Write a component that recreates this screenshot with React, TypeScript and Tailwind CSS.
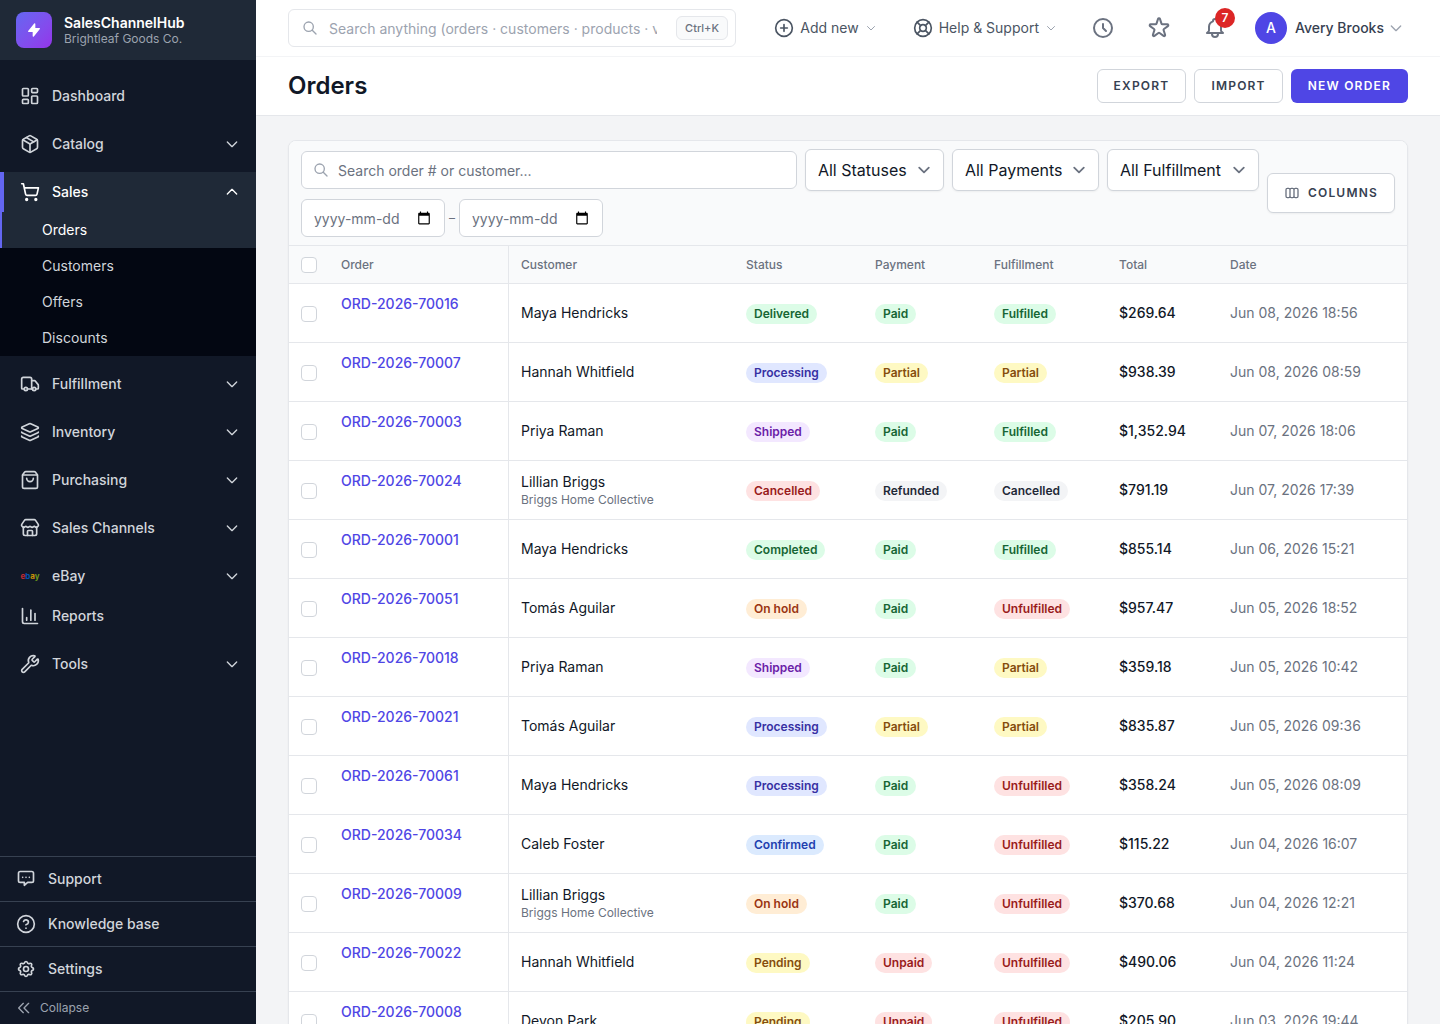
import {
  ChartColumn,
  CircleHelp,
  CirclePlus,
  Layers,
  LayoutDashboard,
  LifeBuoy,
  Package,
  ShoppingBag,
  ShoppingCart,
  Store,
  Truck,
  Wrench,
} from 'lucide-react';
import {
  HiOutlineBell,
  HiOutlineChevronDoubleLeft,
  HiOutlineChevronDown,
  HiOutlineChevronUp,
  HiOutlineClock,
  HiOutlineCog,
  HiOutlineSearch,
  HiOutlineStar,
  HiOutlineViewBoards,
} from 'react-icons/hi';

function EbayMark() {
  return (
    <span aria-hidden="true" className="w-5 text-center text-[8px] leading-none font-bold opacity-80">
      <span className="text-[#e53238]">e</span>
      <span className="text-[#0064d2]">b</span>
      <span className="text-[#f5af02]">a</span>
      <span className="text-[#86b817]">y</span>
    </span>
  );
}

function ChatIcon({ size }: { size: number }) {
  return (
    <svg
      width={size}
      height={size}
      viewBox="0 0 24 24"
      fill="none"
      stroke="currentColor"
      strokeWidth="2"
      strokeLinecap="round"
      strokeLinejoin="round"
    >
      <path d="M8 10h.01M12 10h.01M16 10h.01M10 16H5a2 2 0 01-2-2V5a2 2 0 012-2h14a2 2 0 012 2v9a2 2 0 01-2 2h-5l-4 3.5V16z" />
    </svg>
  );
}

const topNav = [
  { label: 'Dashboard', icon: LayoutDashboard },
  { label: 'Catalog', icon: Package, expandable: true },
  { label: 'Sales', icon: ShoppingCart, expandable: true, children: ['Orders', 'Customers', 'Offers', 'Discounts'] },
  { label: 'Fulfillment', icon: Truck, expandable: true },
  { label: 'Inventory', icon: Layers, expandable: true },
  { label: 'Purchasing', icon: ShoppingBag, expandable: true },
  { label: 'Sales Channels', icon: Store, expandable: true },
  { label: 'eBay', icon: EbayMark, expandable: true, tight: true },
  { label: 'Reports', icon: ChartColumn },
  { label: 'Tools', icon: Wrench, expandable: true },
];

const footerNav = [
  { label: 'Support', icon: ChatIcon },
  { label: 'Knowledge base', icon: CircleHelp },
  { label: 'Settings', icon: HiOutlineCog },
];

const badgeColors: Record<string, string> = {
  Delivered: 'bg-[#dcfce7] text-[#166534]',
  Completed: 'bg-[#dcfce7] text-[#166534]',
  Paid: 'bg-[#dcfce7] text-[#166534]',
  Fulfilled: 'bg-[#dcfce7] text-[#166534]',
  Processing: 'bg-[#e0e7ff] text-[#3730a3]',
  Shipped: 'bg-[#f3e8ff] text-[#6b21a8]',
  Confirmed: 'bg-[#dbeafe] text-[#1e40af]',
  'On hold': 'bg-[#ffedd5] text-[#9a3412]',
  Pending: 'bg-[#fef9c3] text-[#854d0e]',
  Partial: 'bg-[#fef9c3] text-[#854d0e]',
  Unpaid: 'bg-[#fee2e2] text-[#991b1b]',
  Unfulfilled: 'bg-[#fee2e2] text-[#991b1b]',
  Cancelled: 'bg-[#fee2e2] text-[#991b1b]',
  Neutral: 'bg-[#f3f4f6] text-[#1f2937]',
};

type Order = {
  id: string;
  customer: string;
  company?: string;
  status: string;
  payment: string;
  fulfillment: string;
  total: string;
  date: string;
};

const orders: Order[] = [
  { id: 'ORD-2026-70016', customer: 'Maya Hendricks', status: 'Delivered', payment: 'Paid', fulfillment: 'Fulfilled', total: '$269.64', date: 'Jun 08, 2026 18:56' },
  { id: 'ORD-2026-70007', customer: 'Hannah Whitfield', status: 'Processing', payment: 'Partial', fulfillment: 'Partial', total: '$938.39', date: 'Jun 08, 2026 08:59' },
  { id: 'ORD-2026-70003', customer: 'Priya Raman', status: 'Shipped', payment: 'Paid', fulfillment: 'Fulfilled', total: '$1,352.94', date: 'Jun 07, 2026 18:06' },
  { id: 'ORD-2026-70024', customer: 'Lillian Briggs', company: 'Briggs Home Collective', status: 'Cancelled', payment: 'Refunded', fulfillment: 'Cancelled', total: '$791.19', date: 'Jun 07, 2026 17:39' },
  { id: 'ORD-2026-70001', customer: 'Maya Hendricks', status: 'Completed', payment: 'Paid', fulfillment: 'Fulfilled', total: '$855.14', date: 'Jun 06, 2026 15:21' },
  { id: 'ORD-2026-70051', customer: 'Tomás Aguilar', status: 'On hold', payment: 'Paid', fulfillment: 'Unfulfilled', total: '$957.47', date: 'Jun 05, 2026 18:52' },
  { id: 'ORD-2026-70018', customer: 'Priya Raman', status: 'Shipped', payment: 'Paid', fulfillment: 'Partial', total: '$359.18', date: 'Jun 05, 2026 10:42' },
  { id: 'ORD-2026-70021', customer: 'Tomás Aguilar', status: 'Processing', payment: 'Partial', fulfillment: 'Partial', total: '$835.87', date: 'Jun 05, 2026 09:36' },
  { id: 'ORD-2026-70061', customer: 'Maya Hendricks', status: 'Processing', payment: 'Paid', fulfillment: 'Unfulfilled', total: '$358.24', date: 'Jun 05, 2026 08:09' },
  { id: 'ORD-2026-70034', customer: 'Caleb Foster', status: 'Confirmed', payment: 'Paid', fulfillment: 'Unfulfilled', total: '$115.22', date: 'Jun 04, 2026 16:07' },
  { id: 'ORD-2026-70009', customer: 'Lillian Briggs', company: 'Briggs Home Collective', status: 'On hold', payment: 'Paid', fulfillment: 'Unfulfilled', total: '$370.68', date: 'Jun 04, 2026 12:21' },
  { id: 'ORD-2026-70022', customer: 'Hannah Whitfield', status: 'Pending', payment: 'Unpaid', fulfillment: 'Unfulfilled', total: '$490.06', date: 'Jun 04, 2026 11:24' },
  { id: 'ORD-2026-70008', customer: 'Devon Park', status: 'Pending', payment: 'Unpaid', fulfillment: 'Unfulfilled', total: '$205.90', date: 'Jun 03, 2026 19:44' },
];

function Badge({ label, tone = label }: { label: string; tone?: string }) {
  return (
    <span
      className={`inline-flex rounded-full px-2 py-0.5 align-middle text-xs font-semibold ${badgeColors[tone]}`}
    >
      {label}
    </span>
  );
}

function Checkbox({ label }: { label: string }) {
  return (
    <input
      type="checkbox"
      aria-label={label}
      className="block size-4 appearance-none rounded border border-[#d1d5db] bg-white checked:bg-[#4f46e5]"
    />
  );
}

function FilterSelect({ label, option, width }: { label: string; option: string; width: string }) {
  return (
    <div className={`relative ${width}`}>
      <select
        aria-label={label}
        className="block w-full appearance-none rounded-md border border-[#d1d5db] bg-white py-2 pr-8 pl-3 text-base text-[#111827] shadow-xs"
      >
        <option>{option}</option>
      </select>
      <svg viewBox="0 0 20 20" fill="none" className="pointer-events-none absolute inset-y-0 right-2 my-auto size-6">
        <path d="M6 8l4 4 4-4" stroke="#6b7280" strokeWidth="1.5" strokeLinecap="round" strokeLinejoin="round" />
      </svg>
    </div>
  );
}

function DateInput({ label }: { label: string }) {
  return (
    <div className="relative">
      <input
        type="text"
        inputMode="numeric"
        aria-label={label}
        placeholder="yyyy-mm-dd"
        className="block h-[38px] w-36 rounded-md border border-[#d1d5db] bg-white pr-8 pl-3 text-sm placeholder:text-[#6b7280]"
      />
      <svg viewBox="0 0 24 24" className="pointer-events-none absolute inset-y-0 right-3.5 my-auto size-3.5 fill-black">
        <path d="M20 3h-1V1h-2v2H7V1H5v2H4c-1.1 0-2 .9-2 2v16c0 1.1.9 2 2 2h16c1.1 0 2-.9 2-2V5c0-1.1-.9-2-2-2zm0 18H4V8h16v13z" />
      </svg>
    </div>
  );
}

function Sidebar() {
  return (
    <aside className="flex w-64 shrink-0 flex-col bg-[#111827] text-sm font-medium text-[#d1d5db]">
      <div className="flex h-15 shrink-0 items-center gap-3 bg-[#1f2937] px-4">
        <div className="flex size-9 items-center justify-center rounded-lg bg-linear-to-br from-[#6366f1] to-[#9333ea]">
          <svg viewBox="0 0 24 24" className="size-4 fill-white stroke-white" strokeWidth="2" strokeLinejoin="round">
            <path d="M13 10V3L4 14h7v7l9-11h-7z" />
          </svg>
        </div>
        <div className="pt-0.5">
          <div className="text-sm leading-4 font-semibold text-white">SalesChannelHub</div>
          <div className="text-xs leading-4 font-normal text-[#9ca3af]">Brightleaf Goods Co.</div>
        </div>
      </div>

      <nav className="flex-1 pt-4">
        {topNav.map(({ label, icon: Icon, expandable, children, tight }) => (
          <div key={label} className={tight ? '' : 'mb-2'}>
            <a
              href="#"
              className={`flex h-10 items-center gap-3 border-l-4 pr-4 pl-4 ${
                children ? 'border-[#6366f1] bg-[#1f2937] text-white' : 'border-transparent'
              }`}
            >
              <Icon size={20} />
              <span className="flex-1">{label}</span>
              {expandable && (children ? <HiOutlineChevronUp size={16} /> : <HiOutlineChevronDown size={16} />)}
            </a>
            {children && (
              <div className="bg-[#030712] font-normal">
                {children.map((child, i) => (
                  <a
                    key={child}
                    href="#"
                    className={`flex h-9 items-center border-l-2 pl-10 ${
                      i === 0 ? 'border-[#6366f1] bg-[#1f2937] text-white' : 'border-transparent'
                    }`}
                  >
                    {child}
                  </a>
                ))}
              </div>
            )}
          </div>
        ))}
      </nav>

      <div>
        {footerNav.map(({ label, icon: Icon }) => (
          <a key={label} href="#" className="flex h-[45px] items-center gap-3 border-t border-[#374151] px-4">
            <Icon size={20} />
            {label}
          </a>
        ))}
        <button className="flex h-[33px] w-full items-center gap-2 border-t border-[#374151] px-4 text-xs font-normal text-[#9ca3af]">
          <HiOutlineChevronDoubleLeft size={16} />
          Collapse
        </button>
      </div>
    </aside>
  );
}

function TopBar() {
  return (
    <header className="flex h-[57px] shrink-0 items-center justify-between border-b border-[#f3f4f6] bg-white px-8">
      <div className="relative w-full max-w-md">
        <HiOutlineSearch size={16} className="absolute inset-y-0 left-3.5 my-auto text-[#9ca3af]" />
        <input
          type="text"
          aria-label="Search anything"
          placeholder="Search anything (orders · customers · products · vendors)"
          className="block h-[38px] w-full rounded-md border border-[#e5e7eb] bg-white pr-[78px] pl-10 text-sm placeholder:text-[#9ca3af]"
        />
        <kbd className="absolute inset-y-0 right-2 my-auto flex h-6 items-center rounded-md border border-[#e5e7eb] bg-[#f9fafb] px-2 [font-family:Inter,sans-serif] text-[11px] font-medium text-[#6b7280]">
          Ctrl+K
        </kbd>
      </div>
      <div className="flex shrink-0 items-center gap-4 text-sm text-[#4b5563]">
        <button className="flex items-center gap-1.5 px-2.5">
          <CirclePlus size={20} />
          Add new
          <HiOutlineChevronDown size={12} className="text-[#9ca3af]" />
        </button>
        <button className="flex items-center gap-1.5 px-2.5">
          <LifeBuoy size={20} />
          Help &amp; Support
          <HiOutlineChevronDown size={12} className="text-[#9ca3af]" />
        </button>
        <button aria-label="Recent" className="p-2 text-[#6b7280]">
          <HiOutlineClock size={24} />
        </button>
        <button aria-label="Favorites" className="p-2 text-[#6b7280]">
          <HiOutlineStar size={24} />
        </button>
        <button aria-label="Notifications" className="relative p-2 text-[#6b7280]">
          <HiOutlineBell size={24} />
          <span className="absolute top-0 right-0 flex size-5 items-center justify-center rounded-full bg-[#dc2626] text-xs font-semibold text-white">
            7
          </span>
        </button>
        <button className="flex items-center px-1 font-medium text-[#374151]">
          <span className="mr-2 flex size-8 items-center justify-center rounded-full bg-[#4f46e5] text-white">A</span>
          <span className="mr-1">Avery Brooks</span>
          <HiOutlineChevronDown size={16} className="text-[#9ca3af]" />
        </button>
      </div>
    </header>
  );
}

export default function App() {
  return (
    <div className="flex h-screen overflow-hidden bg-[#f3f4f6] [font-family:Inter,sans-serif] text-[#111827]">
      <Sidebar />
      <div className="flex min-w-0 flex-1 flex-col">
        <TopBar />
        <div className="flex shrink-0 items-center justify-between border-b border-[#e5e7eb] bg-white px-8 py-3">
          <h1 className="text-2xl font-semibold">Orders</h1>
          <div className="flex gap-2 text-xs font-semibold tracking-widest text-[#374151] uppercase">
            <button className="h-[34px] rounded-md border border-[#d1d5db] bg-white px-4 uppercase">Export</button>
            <button className="h-[34px] rounded-md border border-[#d1d5db] bg-white px-4 uppercase">Import</button>
            <button className="h-[34px] rounded-md border border-transparent bg-[#4f46e5] px-4 text-white uppercase">
              New order
            </button>
          </div>
        </div>

        <main className="min-h-0 flex-1 overflow-y-auto px-8 pt-6 [scrollbar-width:none]">
          <div className="overflow-hidden rounded-lg border border-[#e5e7eb] bg-white shadow-xs">
            <div className="flex items-center gap-2 border-b border-[#e5e7eb] bg-[#f9fafb] px-3 py-2">
              <div className="flex flex-1 flex-wrap items-center gap-2">
                <div className="relative min-w-52 flex-1">
                  <HiOutlineSearch size={16} className="absolute inset-y-0 left-3 my-auto text-[#9ca3af]" />
                  <input
                    type="search"
                    aria-label="Search orders"
                    placeholder="Search order # or customer..."
                    className="block h-[38px] w-full rounded-md border border-[#d1d5db] bg-white pr-3 pl-9 text-sm placeholder:text-[#6b7280]"
                  />
                </div>
                <FilterSelect label="Status" option="All Statuses" width="w-[139px]" />
                <FilterSelect label="Payment" option="All Payments" width="w-[147px]" />
                <FilterSelect label="Fulfillment" option="All Fulfillment" width="w-[152px]" />
                <div className="flex items-center gap-1 text-xs text-[#6b7280]">
                  <DateInput label="From date" />
                  <span>–</span>
                  <DateInput label="To date" />
                </div>
              </div>
              <button className="flex h-10 items-center gap-2 rounded-md border border-[#d1d5db] bg-white px-4 text-xs font-semibold tracking-widest text-[#374151] uppercase shadow-xs">
                <HiOutlineViewBoards size={16} className="text-[#6b7280]" />
                Columns
              </button>
            </div>

            <table className="w-full table-fixed border-separate border-spacing-0 text-left text-sm [&_td]:border-b [&_td]:border-[#e5e7eb] [&_th]:border-b [&_th]:border-[#e5e7eb]">
              <colgroup>
                <col className="w-10" />
                <col className="w-[180px]" />
                <col />
                <col className="w-[129px]" />
                <col className="w-[119px]" />
                <col className="w-[125px]" />
                <col className="w-[111px]" />
                <col className="w-[189px]" />
              </colgroup>
              <thead className="bg-[#f9fafb] text-xs text-[#6b7280]">
                <tr className="h-[38px]">
                  <th className="px-3">
                    <Checkbox label="Select all orders" />
                  </th>
                  <th className="border-r px-3 font-medium">Order</th>
                  <th className="px-3 font-medium">Customer</th>
                  <th className="px-3 font-medium">Status</th>
                  <th className="px-3 font-medium">Payment</th>
                  <th className="px-3 font-medium">Fulfillment</th>
                  <th className="px-3 font-medium">Total</th>
                  <th className="px-3 font-medium">Date</th>
                </tr>
              </thead>
              <tbody>
                {orders.map((order) => (
                  <tr key={order.id} className="h-[59px]">
                    <td className="px-3 pt-0.5">
                      <Checkbox label={`Select ${order.id}`} />
                    </td>
                    <td className="border-r px-3 pt-2.5 align-top">
                      <a href="#" className="font-medium text-[#4f46e5]">
                        {order.id}
                      </a>
                    </td>
                    <td className="px-3">
                      <div>{order.customer}</div>
                      {order.company && <div className="text-xs text-[#6b7280]">{order.company}</div>}
                    </td>
                    <td className="px-3">
                      <Badge label={order.status} />
                    </td>
                    <td className="px-3">
                      <Badge label={order.payment} tone={order.payment === 'Refunded' ? 'Neutral' : order.payment} />
                    </td>
                    <td className="px-3">
                      <Badge
                        label={order.fulfillment}
                        tone={order.fulfillment === 'Cancelled' ? 'Neutral' : order.fulfillment}
                      />
                    </td>
                    <td className="px-3 font-medium">{order.total}</td>
                    <td className="px-3 text-[#6b7280]">{order.date}</td>
                  </tr>
                ))}
              </tbody>
            </table>
          </div>
        </main>
      </div>
    </div>
  );
}
